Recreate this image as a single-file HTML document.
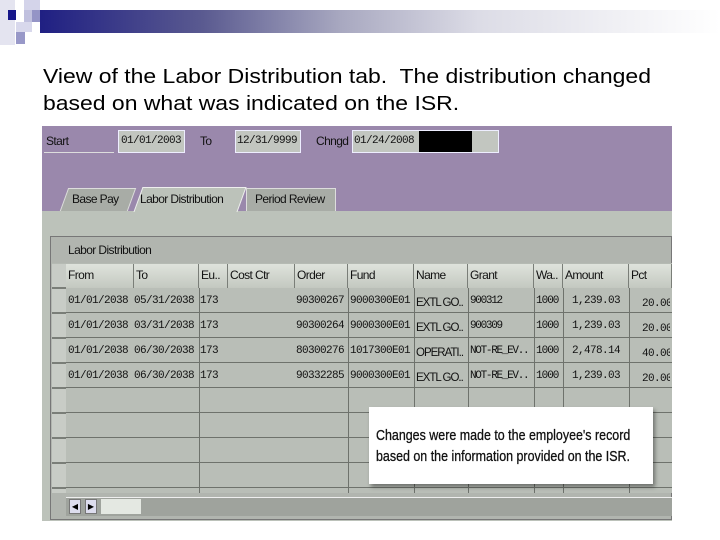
<!DOCTYPE html>
<html><head><meta charset="utf-8"><style>
body{margin:0;width:720px;height:540px;background:#fff;position:relative;overflow:hidden;font-family:"Liberation Sans",sans-serif}
.a{position:absolute}
.t{font-family:"Liberation Sans",sans-serif;font-size:12px;letter-spacing:-0.6px;color:#111;white-space:nowrap}
.m{font-family:"Liberation Mono",monospace;font-size:11px;letter-spacing:-0.6px;color:#111;white-space:nowrap}
.fld{background:#c2c6c0;border:1px solid #eef;box-sizing:border-box}
.hc{background:linear-gradient(#dfe3dc,#c3c8c0);border-right:1px solid #7a7e78;box-sizing:border-box;height:24px;top:264px;padding:4px 0 0 2px;overflow:hidden}
</style></head><body>
<div class="a" style="left:30px;top:10px;width:690px;height:23px;background:linear-gradient(90deg,#1c1c82,#5a5a90 25%,#a8a8c0 45%,#dcdce6 65%,#fff 100%)"></div>
<div class="a" style="left:0;top:0;width:40px;height:44px;background:#fff"></div>
<div class="a" style="left:0;top:0;width:15px;height:45px;background:#e4e4f0"></div>
<div class="a" style="left:8px;top:10px;width:8px;height:10px;background:#16168a"></div>
<div class="a" style="left:24px;top:0;width:16px;height:10px;background:#d4d4ea"></div>
<div class="a" style="left:24px;top:10px;width:8px;height:12px;background:#c0c0de"></div>
<div class="a" style="left:32px;top:10px;width:8px;height:12px;background:#9494c6"></div>
<div class="a" style="left:16px;top:22px;width:16px;height:10px;background:#d8d8ec"></div>
<div class="a" style="left:16px;top:32px;width:9px;height:12px;background:#9898c8"></div>
<div class="a" style="left:43px;top:63px;font-size:20.5px;line-height:27px;color:#000;transform:scaleX(1.12);transform-origin:left">View of the Labor Distribution tab.&nbsp; The distribution changed<br>based on what was indicated on the ISR.</div>

<div class="a" style="left:42px;top:126px;width:630px;height:86px;background:#9a88ac"></div>
<div class="a t" style="left:46px;top:134px">Start</div>
<div class="a" style="left:44px;top:152px;width:70px;height:1px;background:#ddd"></div>
<div class="a fld" style="left:118px;top:130px;width:67px;height:23px"></div><div class="a m" style="left:121px;top:135px">01/01/2003</div>
<div class="a t" style="left:200px;top:134px">To</div>
<div class="a fld" style="left:235px;top:130px;width:66px;height:23px"></div><div class="a m" style="left:237px;top:135px">12/31/9999</div>
<div class="a t" style="left:316px;top:134px">Chngd</div>
<div class="a fld" style="left:352px;top:130px;width:147px;height:23px"></div><div class="a m" style="left:354px;top:135px">01/24/2008</div>
<div class="a" style="left:419px;top:131px;width:53px;height:21px;background:#000"></div>

<div class="a" style="left:42px;top:211px;width:630px;height:310px;background:#bcc2ba"></div>
<div class="a" style="left:64px;top:188px;width:68px;height:23px;background:#a8aca6;border:1px solid #ddd;border-bottom:none;box-sizing:border-box;transform:skewX(-20deg)"></div>
<div class="a t" style="left:72px;top:192px">Base Pay</div>
<div class="a" style="left:246px;top:188px;width:90px;height:23px;background:#a8aca6;border:1px solid #ddd;border-bottom:none;box-sizing:border-box"></div>
<div class="a t" style="left:255px;top:192px">Period Review</div>
<div class="a" style="left:138px;top:187px;width:104px;height:25px;background:#bcc2ba;border:1px solid #eee;border-bottom:none;box-sizing:border-box;transform:skewX(-20deg)"></div>
<div class="a t" style="left:140px;top:192px">Labor Distribution</div>

<div class="a" style="left:50px;top:236px;width:622px;height:284px;background:#b1b5af;border:1px solid #777;box-sizing:border-box"></div>
<div class="a t" style="left:68px;top:243px">Labor Distribution</div>
<div class="a" style="left:52px;top:263px;width:620px;height:230px;background:#b5bab3"></div>
<div class="a" style="left:52px;top:264px;width:14px;height:229px;background:repeating-linear-gradient(#c8ccc6 0 23px,#7a7e78 23px 25px)"></div>
<div class="a" style="left:66px;top:288px;width:606px;height:205px;background:repeating-linear-gradient(#b9beb7 0 24px,#6e726c 24px 25px)"></div>
<div class="a hc t" style="left:66px;width:68px">From</div>
<div class="a hc t" style="left:134px;width:65px">To</div>
<div class="a hc t" style="left:199px;width:29px">Eu..</div>
<div class="a hc t" style="left:228px;width:67px">Cost Ctr</div>
<div class="a hc t" style="left:295px;width:53px">Order</div>
<div class="a hc t" style="left:348px;width:66px">Fund</div>
<div class="a hc t" style="left:414px;width:54px">Name</div>
<div class="a hc t" style="left:468px;width:66px">Grant</div>
<div class="a hc t" style="left:534px;width:29px">Wa..</div>
<div class="a hc t" style="left:563px;width:66px">Amount</div>
<div class="a hc t" style="left:629px;width:43px">Pct</div>
<div class="a" style="left:199px;top:288px;width:1px;height:205px;background:#6e726c"></div>
<div class="a" style="left:348px;top:288px;width:1px;height:205px;background:#6e726c"></div>
<div class="a" style="left:414px;top:288px;width:1px;height:205px;background:#6e726c"></div>
<div class="a" style="left:468px;top:288px;width:1px;height:205px;background:#6e726c"></div>
<div class="a" style="left:534px;top:288px;width:1px;height:205px;background:#6e726c"></div>
<div class="a" style="left:563px;top:288px;width:1px;height:205px;background:#6e726c"></div>
<div class="a" style="left:629px;top:288px;width:1px;height:205px;background:#6e726c"></div>

<div class="a m" style="left:68px;top:289px;line-height:25px">01/01/2038 05/31/2038 173<br>01/01/2038 03/31/2038 173<br>01/01/2038 06/30/2038 173<br>01/01/2038 06/30/2038 173</div>
<div class="a m" style="left:296px;top:289px;line-height:25px">90300267 9000300E01<br>90300264 9000300E01<br>80300276 1017300E01<br>90332285 9000300E01</div>
<div class="a t" style="left:416px;top:291px;line-height:25px;letter-spacing:-1px;font-size:11.5px">EXTL GO..<br>EXTL GO..<br>OPERATI..<br>EXTL GO..</div>
<div class="a m" style="left:470px;top:289px;line-height:25px;letter-spacing:-1.3px">900312<br>900309<br>NOT-RE_EV..<br>NOT-RE_EV..</div>
<div class="a m" style="left:536px;top:289px;line-height:25px;letter-spacing:-1px">1000<br>1000<br>1000<br>1000</div>
<div class="a m" style="left:572px;top:289px;line-height:25px">1,239.03<br>1,239.03<br>2,478.14<br>1,239.03</div>
<div class="a" style="left:630px;top:288px;width:40px;height:110px;overflow:hidden"><div class="a m" style="left:12px;top:4px;line-height:25px">20.00<br>20.00<br>40.00<br>20.00</div></div>

<div class="a" style="left:66px;top:497px;width:606px;height:18px;background:#9fa39d;border-top:1px solid #eee"></div>
<div class="a" style="left:69px;top:499px;width:12px;height:15px;background:#dde;border:1px solid #777;box-sizing:border-box;font-size:8px;text-align:center;line-height:13px">◀</div>
<div class="a" style="left:85px;top:499px;width:12px;height:15px;background:#dde;border:1px solid #777;box-sizing:border-box;font-size:8px;text-align:center;line-height:13px">▶</div>
<div class="a" style="left:101px;top:499px;width:40px;height:15px;background:#e4e8e2"></div>

<div class="a" style="left:369px;top:407px;width:284px;height:77px;background:#fff;box-shadow:2px 3px 4px rgba(0,0,0,.4)"></div>
<div class="a" style="left:376px;top:425px;font-family:'Liberation Sans',sans-serif;font-size:15px;line-height:21px;color:#111;white-space:nowrap;transform:scaleX(0.83);transform-origin:left;-webkit-text-stroke:0.3px #111">Changes were made to the employee's record<br>based on the information provided on the ISR.</div>
</body></html>
